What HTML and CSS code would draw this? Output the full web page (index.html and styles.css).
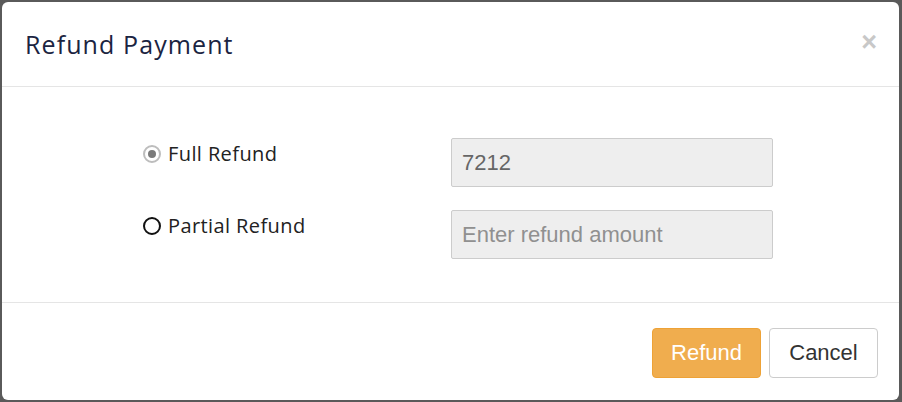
FILE: index.html
```html
<!DOCTYPE html>
<html>
<head>
<meta charset="utf-8">
<link rel="stylesheet" href="styles.css">
</head>
<body>
<div class="modal">
  <div class="modal-header">
    <h4 class="modal-title">Refund Payment</h4>
    <span class="close">&times;</span>
  </div>
  <div class="modal-body">
    <div class="row">
      <label class="radio-label"><span class="radio checked"></span>Full Refund</label>
      <div class="field"><input class="input" type="text" value="7212" readonly></div>
    </div>
    <div class="row">
      <label class="radio-label"><span class="radio"></span>Partial Refund</label>
      <div class="field"><input class="input" type="text" placeholder="Enter refund amount"></div>
    </div>
  </div>
  <div class="modal-footer">
    <button class="btn btn-warning">Refund</button>
    <button class="btn btn-default">Cancel</button>
  </div>
</div>
</body>
</html>
```
FILE: styles.css
```css
html, body {
  margin: 0;
  padding: 0;
  background: #5a5a5a;
  width: 902px;
  height: 402px;
  overflow: hidden;
}
.modal {
  margin: 2px 0 0 2px;
  width: 897px;
  height: 398px;
  background: #fff;
  border-radius: 6px;
  box-sizing: border-box;
  display: flex;
  flex-direction: column;
  font-family: "Open Sans", sans-serif;
}
.modal-header {
  flex-shrink: 0;
  height: 84px;
  border-bottom: 1px solid #e5e5e5;
  display: flex;
  align-items: center;
  justify-content: space-between;
  padding: 0 22px 0 23px;
  box-sizing: content-box;
}
.modal-title {
  margin: 0;
  font-family: "Open Sans", sans-serif;
  font-weight: 400;
  font-size: 25px;
  letter-spacing: 1.1px;
  color: #1b2441;
}
.close {
  font-family: "Liberation Sans", Arial, sans-serif;
  font-weight: 700;
  font-size: 27px;
  color: #c8c8c8;
  line-height: 1;
  position: relative;
  top: -2px;
}
.modal-body {
  flex-shrink: 0;
  height: 216px;
  border-bottom: 1px solid #e5e5e5;
  padding: 51px 0 0 141px;
  box-sizing: border-box;
  display: flex;
  flex-direction: column;
  gap: 24px;
}
.row {
  display: flex;
  align-items: flex-start;
  height: 48px;
}
.radio-label {
  width: 308px;
  display: flex;
  align-items: center;
  font-size: 20px;
  letter-spacing: 0.4px;
  line-height: 28px;
  padding-top: 2px;
  color: #222;
  font-family: "Open Sans", sans-serif;
}
.radio {
  width: 14px;
  height: 14px;
  border: 2px solid #111;
  border-radius: 50%;
  margin: 0 7px 0 0;
  box-sizing: content-box;
  position: relative;
}
.radio.checked {
  border-color: #bdbdbd;
}
.radio.checked::after {
  content: "";
  position: absolute;
  left: 3px;
  top: 3px;
  width: 8px;
  height: 8px;
  border-radius: 50%;
  background: #7a7a7a;
}
.input {
  width: 322px;
  height: 49px;
  box-sizing: border-box;
  border: 1px solid #ccc;
  background: #eee;
  border-radius: 2px;
  padding: 0 10px;
  font-family: "Liberation Sans", Arial, sans-serif;
  font-size: 22px;
  color: #666;
  outline: none;
}
.input::placeholder {
  color: #909090;
}
.modal-footer {
  flex: 1;
  display: flex;
  justify-content: flex-end;
  align-items: flex-start;
  padding: 25px 21px 0 0;
  gap: 8px;
}
.btn {
  height: 50px;
  width: 109px;
  border-radius: 4px;
  font-family: "Liberation Sans", Arial, sans-serif;
  font-size: 22px;
  cursor: pointer;
}
.btn-warning {
  background: #f0ad4e;
  border: 1px solid #eea236;
  color: #fff;
}
.btn-default {
  background: #fff;
  border: 1px solid #ccc;
  color: #333;
}
```
